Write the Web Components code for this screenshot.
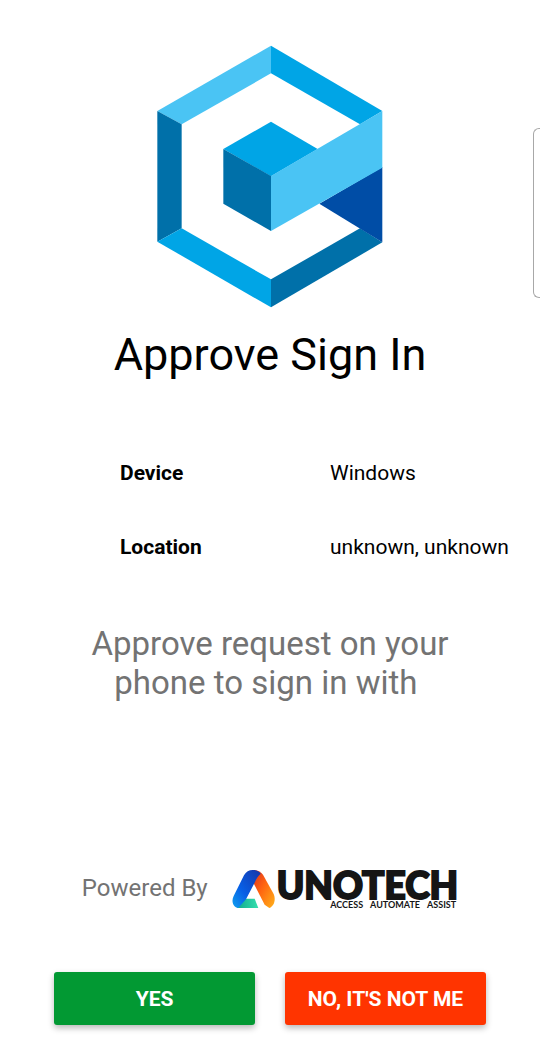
<!DOCTYPE html>
<html lang="en">
<head>
<meta charset="utf-8">
<meta name="viewport" content="width=device-width, initial-scale=1">
<title>Approve Sign In</title>
<style>
  body { margin: 0; background: #fff; color: #000; font-family: Roboto, "Liberation Sans", sans-serif; }
</style>
</head>
<body>
<sign-in-request></sign-in-request>
<script>
const define = (name, html) => {
  const template = document.createElement('template');
  template.innerHTML = html;
  customElements.define(name, class extends HTMLElement {
    constructor() {
      super();
      this.attachShadow({ mode: 'open' }).append(template.content.cloneNode(true));
    }
  });
};

define('cube-logo', `
  <style>
    :host { display: block; width: 226px; }
    svg { display: block; width: 100%; }
  </style>
  <svg viewBox="21 30 678 789" role="img" aria-label="Logo">
    <path fill="#4ac4f4" d="M363 32 22 228 95 268 363 115Z"/>
    <path fill="#00a5e6" d="M363 32 697 228 630 268 363 115Z"/>
    <path fill="#0070a9" d="M22 228 95 268V580L22 620Z"/>
    <path fill="#00a5e6" d="M22 620 95 580 363 733V817Z"/>
    <path fill="#0070a9" d="M363 733 630 580 697 622 363 817Z"/>
    <path fill="#004da6" d="M697 396V622L508 506Z"/>
    <path fill="#00a5e6" d="M363 260 503 342 363 424 220 342Z"/>
    <path fill="#0070a9" d="M220 342 363 423V588L220 506Z"/>
    <path fill="#4ac4f4" d="M363 423 697 228V398L363 588Z"/>
  </svg>`);

define('detail-row', `
  <style>
    :host { display: grid; grid-template-columns: 210px 1fr; font-size: 21px; line-height: 26px; }
    .label { font-weight: 700; }
    .value { white-space: nowrap; }
  </style>
  <span class="label"><slot name="label"></slot></span>
  <span class="value"><slot></slot></span>`);

define('action-button', `
  <style>
    :host { display: block; }
    button {
      display: block; width: 100%; height: 53px; padding: 0; border: 0; border-radius: 3px;
      background: var(--action-color); color: #fff; font: 700 21px/26px Roboto, sans-serif;
      box-shadow: 0 3px 6px rgba(0, 0, 0, .28); cursor: pointer;
    }
  </style>
  <button type="button"><slot></slot></button>`);

define('unotech-brand', `
  <style>
    :host { display: flex; gap: 2px; color: #151515; font-family: Lato, sans-serif; }
    svg { display: block; width: 43px; height: 38px; flex: none; }
    .words { display: flex; flex-direction: column; align-items: flex-end; }
    .name { font-size: 37px; line-height: 30px; font-weight: 900; -webkit-text-stroke: 2px; }
    .tag { display: flex; gap: 7px; padding-right: 2px; font-size: 9px; line-height: 9px; font-weight: 700; }
  </style>
  <svg viewBox="0 0 129 114" aria-hidden="true">
    <defs>
      <linearGradient id="blue" x1="0" y1="1" x2="1" y2="0">
        <stop offset="0" stop-color="#10a0ef"/><stop offset=".4" stop-color="#075fe6"/><stop offset="1" stop-color="#1736a8"/>
      </linearGradient>
      <linearGradient id="warm" x1="0" y1="0" x2="1" y2="1">
        <stop offset="0" stop-color="#d92c20"/><stop offset=".45" stop-color="#ff6410"/><stop offset="1" stop-color="#ffb21a"/>
      </linearGradient>
      <linearGradient id="mint" x1="0" y1="0" x2="1" y2="0">
        <stop offset="0" stop-color="#12a98c"/><stop offset="1" stop-color="#35dfae"/>
      </linearGradient>
    </defs>
    <path fill="url(#warm)" d="M62 0C77 0 87 6 93 14L125 72C132 88 127 108 112 114L98 104 64 38Z"/>
    <path fill="url(#mint)" d="M15 114 35 86H68L79 114Z"/>
    <path fill="url(#blue)" d="M62 0C74 0 82 4 86 11 79 17 72 27 69 36L42 88 19 114C3 112-3 94 5 78L36 16C42 5 51 0 62 0Z"/>
  </svg>
  <div class="words">
    <span class="name">UNOTECH</span>
    <span class="tag"><span>ACCESS</span><span>AUTOMATE</span><span>ASSIST</span></span>
  </div>`);

define('edge-handle', `
  <style>
    :host {
      position: absolute; top: 128px; right: 0; width: 7px; height: 170px; box-sizing: border-box;
      border: 1px solid #a8a8a8; border-right: 0; border-radius: 6px 0 0 6px;
    }
  </style>`);

define('sign-in-request', `
  <style>
    :host { display: block; position: relative; }
    main { display: flex; flex-direction: column; padding: 45px 0 34px; }
    cube-logo { align-self: center; }
    h1 { margin: 20px 0 0; font-size: 45px; line-height: 54px; font-weight: 400; text-align: center; }
    .details { display: grid; gap: 48px; margin: 78px 0 0 120px; }
    .message { margin: 64px auto 0; max-width: 400px; color: #737373; font-size: 33px; line-height: 39px; text-align: center; }
    .powered { display: flex; justify-content: center; align-items: flex-start; gap: 24px; margin-top: 168px; color: #737373; font-size: 24px; line-height: 36px; }
    .actions { display: grid; grid-template-columns: 1fr 1fr; gap: 30px; margin: 63px 54px 0; }
    .yes { --action-color: #029933; }
    .no { --action-color: #ff3400; }
  </style>
  <main>
    <cube-logo></cube-logo>
    <h1>Approve Sign In</h1>
    <div class="details">
      <detail-row><span slot="label">Device</span>Windows</detail-row>
      <detail-row><span slot="label">Location</span>unknown, unknown</detail-row>
    </div>
    <div class="message">Approve request on your phone to sign in with&nbsp;</div>
    <div class="powered"><span>Powered By</span><unotech-brand></unotech-brand></div>
    <div class="actions">
      <action-button class="yes">YES</action-button>
      <action-button class="no">NO, IT'S NOT ME</action-button>
    </div>
  </main>
  <edge-handle></edge-handle>`);
</script>
</body>
</html>
